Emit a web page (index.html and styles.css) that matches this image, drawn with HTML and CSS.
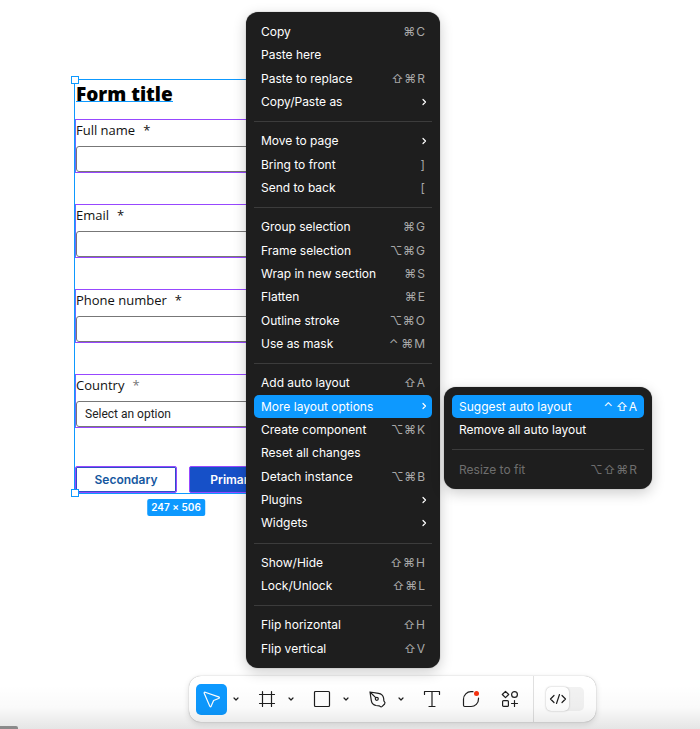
FILE: index.html
```html
<!DOCTYPE html>
<html lang="en">
<head>
<meta charset="UTF-8">
<title>Form design</title>
<link rel="stylesheet" href="styles.css">
</head>

<body>

<main class="canvas">
  <form class="frame">
    <h1 class="form-title"><span>Form title</span></h1>

    <div class="field">
      <label for="fullname">Full name <span class="req">*</span></label>
      <input id="fullname" type="text">
    </div>
    <div class="field">
      <label for="email">Email <span class="req">*</span></label>
      <input id="email" type="text">
    </div>
    <div class="field">
      <label for="phone">Phone number <span class="req">*</span></label>
      <input id="phone" type="text">
    </div>
    <div class="field">
      <label for="country">Country <span class="req light">*</span></label>
      <select id="country"><option>Select an option</option></select>
    </div>

    <div class="actions">
      <button type="button" class="btn secondary">Secondary</button>
      <button type="button" class="btn primary">Primary</button>
    </div>

    <i class="handle top"></i>
    <i class="handle bottom"></i>
    <span class="size">247 × 506</span>
  </form>
</main>

<div class="scrollbar"></div>

<nav class="toolbar">
  <div class="tools">
    <div class="tool">
      <button class="tool-btn active" aria-label="Move"><svg width="20" height="20" viewBox="0 0 20 20"><path d="M3.1 3.200 L16.600 7.900 Q18.200 8.700 16.600 9.500 L11.600 11.500 L9.200 17.100 Q8.400 18.600 7.700 17 L2.200 4.300 Q2 3 3.100 3.200Z"/></svg></button>
      <button class="caret" aria-label="Move tools"><svg width="8" height="8" viewBox="0 0 8 8"><path d="M2 3l2 2 2-2"/></svg></button>
    </div>
    <div class="tool">
      <button class="tool-btn" aria-label="Frame"><svg width="20" height="20" viewBox="0 0 20 20"><path d="M5.500 2.500v15M14.500 2.500v15M2.500 5.500h15M2.500 14.500h15"/></svg></button>
      <button class="caret" aria-label="Frame tools"><svg width="8" height="8" viewBox="0 0 8 8"><path d="M2 3l2 2 2-2"/></svg></button>
    </div>
    <div class="tool">
      <button class="tool-btn" aria-label="Rectangle"><svg width="20" height="20" viewBox="0 0 20 20"><rect x="2.500" y="2.500" width="15" height="15" rx="1"/></svg></button>
      <button class="caret" aria-label="Shape tools"><svg width="8" height="8" viewBox="0 0 8 8"><path d="M2 3l2 2 2-2"/></svg></button>
    </div>
    <div class="tool">
      <button class="tool-btn" aria-label="Pen"><svg width="20" height="20" viewBox="0 0 20 20"><path d="M3 3 L11.500 4.300 Q15.800 5 16.600 9 L16.900 12 Q18.700 13.500 17.600 15 L15.200 17.400 Q13.800 18.500 12.300 16.900 L9 16.500 Q5 15.800 4.300 11.700Z M3 3l5.700 5.700"/><circle cx="9.800" cy="9.800" r="1.500"/></svg></button>
      <button class="caret" aria-label="Drawing tools"><svg width="8" height="8" viewBox="0 0 8 8"><path d="M2 3l2 2 2-2"/></svg></button>
    </div>
    <div class="tool single">
      <button class="tool-btn" aria-label="Text"><svg width="20" height="20" viewBox="0 0 20 20"><path d="M2.500 5.500v-3h15v3M10 2.500v15M7 17.500h6"/></svg></button>
      <button class="tool-btn" aria-label="Comment"><svg width="20" height="20" viewBox="0 0 20 20"><path d="M12 2.700H10.300A7.500 7.500 0 0 0 2.500 10.300V16.300Q2.500 17.500 3.700 17.500H9.700A7.500 7.500 0 0 0 17.500 9.700V9"/><circle class="dot" cx="15.500" cy="4.500" r="2.500"/></svg></button>
      <button class="tool-btn" aria-label="Actions"><svg width="20" height="20" viewBox="0 0 20 20"><path d="M5.500 2.300 L8.700 5.500 L5.500 8.700 L2.300 5.500Z M14.500 11.500v6M11.500 14.500h6"/><circle cx="14.500" cy="5.500" r="2.900"/><rect x="2.600" y="11.600" width="5.800" height="5.800" rx="1"/></svg></button>
    </div>
  </div>
  <div class="dev">
    <button class="switch" aria-label="Dev Mode"><span class="knob"><svg width="18" height="14" viewBox="0 0 18 14"><path d="M5 3.500L1.500 7 5 10.500M13 3.500L16.500 7 13 10.500M10.500 2.500l-3 9"/></svg></span></button>
  </div>
</nav>

<div class="fade"></div>

<menu class="menu main-menu">
  <li><button>Copy <kbd><i>⌘</i><b>C</b></kbd></button></li>
  <li><button>Paste here</button></li>
  <li><button>Paste to replace <kbd><i>⇧</i><i>⌘</i><b>R</b></kbd></button></li>
  <li><button>Copy/Paste as <svg class="more" width="6" height="8" viewBox="0 0 6 8"><path d="M2 1.500L4.500 4 2 6.500"/></svg></button></li>
  <li class="sep"></li>
  <li><button>Move to page <svg class="more" width="6" height="8" viewBox="0 0 6 8"><path d="M2 1.500L4.500 4 2 6.500"/></svg></button></li>
  <li><button>Bring to front <kbd><b>]</b></kbd></button></li>
  <li><button>Send to back <kbd><b>[</b></kbd></button></li>
  <li class="sep"></li>
  <li><button>Group selection <kbd><i>⌘</i><b>G</b></kbd></button></li>
  <li><button>Frame selection <kbd><i>⌥</i><i>⌘</i><b>G</b></kbd></button></li>
  <li><button>Wrap in new section <kbd><i>⌘</i><b>S</b></kbd></button></li>
  <li><button>Flatten <kbd><i>⌘</i><b>E</b></kbd></button></li>
  <li><button>Outline stroke <kbd><i>⌥</i><i>⌘</i><b>O</b></kbd></button></li>
  <li><button>Use as mask <kbd><i>⌃</i><i>⌘</i><b>M</b></kbd></button></li>
  <li class="sep"></li>
  <li><button>Add auto layout <kbd><i>⇧</i><b>A</b></kbd></button></li>
  <li><button class="selected">More layout options <svg class="more" width="6" height="8" viewBox="0 0 6 8"><path d="M2 1.500L4.500 4 2 6.500"/></svg></button></li>
  <li><button>Create component <kbd><i>⌥</i><i>⌘</i><b>K</b></kbd></button></li>
  <li><button>Reset all changes</button></li>
  <li><button>Detach instance <kbd><i>⌥</i><i>⌘</i><b>B</b></kbd></button></li>
  <li><button>Plugins <svg class="more" width="6" height="8" viewBox="0 0 6 8"><path d="M2 1.500L4.500 4 2 6.500"/></svg></button></li>
  <li><button>Widgets <svg class="more" width="6" height="8" viewBox="0 0 6 8"><path d="M2 1.500L4.500 4 2 6.500"/></svg></button></li>
  <li class="sep"></li>
  <li><button>Show/Hide <kbd><i>⇧</i><i>⌘</i><b>H</b></kbd></button></li>
  <li><button>Lock/Unlock <kbd><i>⇧</i><i>⌘</i><b>L</b></kbd></button></li>
  <li class="sep"></li>
  <li><button>Flip horizontal <kbd><i>⇧</i><b>H</b></kbd></button></li>
  <li><button>Flip vertical <kbd><i>⇧</i><b>V</b></kbd></button></li>
</menu>

<menu class="menu sub-menu">
  <li><button class="selected">Suggest auto layout <kbd><i>⌃</i><i>⇧</i><b>A</b></kbd></button></li>
  <li><button>Remove all auto layout</button></li>
  <li class="sep"></li>
  <li><button disabled>Resize to fit <kbd><i>⌥</i><i>⇧</i><i>⌘</i><b>R</b></kbd></button></li>
</menu>

</body>
</html>
```
FILE: styles.css
```css
* { box-sizing:border-box; }
body { margin:0; min-height:100vh; position:relative; overflow:hidden; background:white; font-family:Inter, sans-serif; }
button { font:inherit; color:inherit; border:none; background:none; padding:0; }
svg { display:block; fill:none; stroke:#1e1e1e; stroke-width:1.2; stroke-linecap:round; stroke-linejoin:round; }

/* form on the canvas */
.canvas { padding:79px 0 0 74px; }
.frame { position:relative; width:204px; border:1px solid #0d99ff; font-family:"Open Sans", sans-serif; color:#111; }
.form-title { margin:0 0 17px; padding-left:1px; height:22px; font-size:19px; line-height:28px; font-weight:800; color:black; }
.form-title span { display:inline-block; height:22px; border-bottom:1px solid #0d99ff; }
.field { height:54px; margin-bottom:31px; border:1px solid #9747ff; border-left-color:#6a6cff; display:flex; flex-direction:column; justify-content:space-between; }
.field label { font-size:13px; line-height:20px; font-weight:500; display:flex; gap:8px; }
.light { color:#777; }
.field input, .field select { appearance:none; width:100%; height:26px; border:1px solid #777; border-radius:3px; background:white; padding:0 8px; font-family:Roboto, sans-serif; font-size:12px; color:#222; }
.actions { display:flex; gap:12px; margin-top:38px; }
.btn { height:27px; font-family:Inter, sans-serif; font-size:12px; font-weight:600; border:1px solid #9747ff; border-radius:2px; }
.secondary { width:102px; color:#1557a0; box-shadow:inset 0 0 0 1px #2b50c8; }
.primary { flex:1; background:#1650c8; color:white; }
.handle { position:absolute; left:-4px; width:8px; height:8px; background:white; border:1px solid #0d99ff; }
.top { top:-4px; }
.bottom { bottom:-4px; }
.size { position:absolute; top:100%; left:50%; transform:translateX(-50%); margin-top:6px; padding:0 4px; background:#0d99ff; color:white; border-radius:2px; font-family:Inter, sans-serif; font-size:10px; line-height:17px; font-weight:600; white-space:nowrap; }

/* context menus */
.menu { position:absolute; margin:0; padding:8px; list-style:none; display:flex; flex-direction:column; background:#1e1e1e; color:white; border-radius:12px; font-size:12px; box-shadow:0 0 1px rgba(0,0,0,.5), 0 4px 14px rgba(0,0,0,.2); }
.menu li { flex:1; display:flex; }
.menu .sep { flex:none; height:1px; margin:8px 0 7px; background:#3c3c3c; }
.menu button { flex:1; display:flex; justify-content:space-between; align-items:center; padding:0 7px; border-radius:5px; text-align:left; }
.menu .selected { background:#0d99ff; }
.menu button:disabled, .menu button:disabled kbd { color:#6e6e6e; }
.main-menu { top:12px; bottom:61px; left:246px; width:194px; }
.sub-menu { top:387px; left:444px; width:208px; }
.sub-menu li { min-height:23px; }
.sub-menu .sep { min-height:1px; margin-bottom:8px; }
kbd { display:flex; align-items:center; gap:2px; font-family:inherit; color:#a8a8a8; }
kbd b { font-weight:400; }
kbd i { width:11px; text-align:center; font-style:normal; font-family:Inter, "DejaVu Sans", sans-serif; }
.selected kbd { color:white; }
.more { stroke:white; margin-right:-2px; }

/* toolbar */
.toolbar { position:absolute; left:189px; bottom:7px; height:46px; display:flex; background:white; border-radius:12px; box-shadow:0 0 1px rgba(0,0,0,.4), 0 2px 6px rgba(0,0,0,.14); }
.tools { display:flex; align-items:center; gap:6px; padding:0 8px 0 7px; }
.tool { display:flex; }
.single { gap:8px; }
.tool-btn { width:31px; height:31px; border-radius:5px; display:grid; place-items:center; }
.active { background:#0d99ff; }
.active svg { stroke:white; }
.caret { width:18px; display:grid; place-items:center; }
.tool-btn .dot { fill:#f5310f; stroke:none; }
.dev { display:flex; align-items:center; padding:0 12px; border-left:1px solid #e0e0e0; }
.switch { width:38px; height:24px; background:#f2f2f2; border-radius:5px; display:flex; }
.knob { width:23px; height:24px; display:grid; place-items:center; background:white; border-radius:5px; box-shadow:0 0 2px rgba(0,0,0,.3); }

.fade { position:absolute; left:0; right:0; bottom:0; height:44px; background:linear-gradient(transparent, rgba(0,0,0,.02) 50%, rgba(0,0,0,.1)); pointer-events:none; }
.scrollbar { position:absolute; left:0; bottom:0; width:18px; height:3px; background:#999; border-radius:0 2px 0 0; }
```
